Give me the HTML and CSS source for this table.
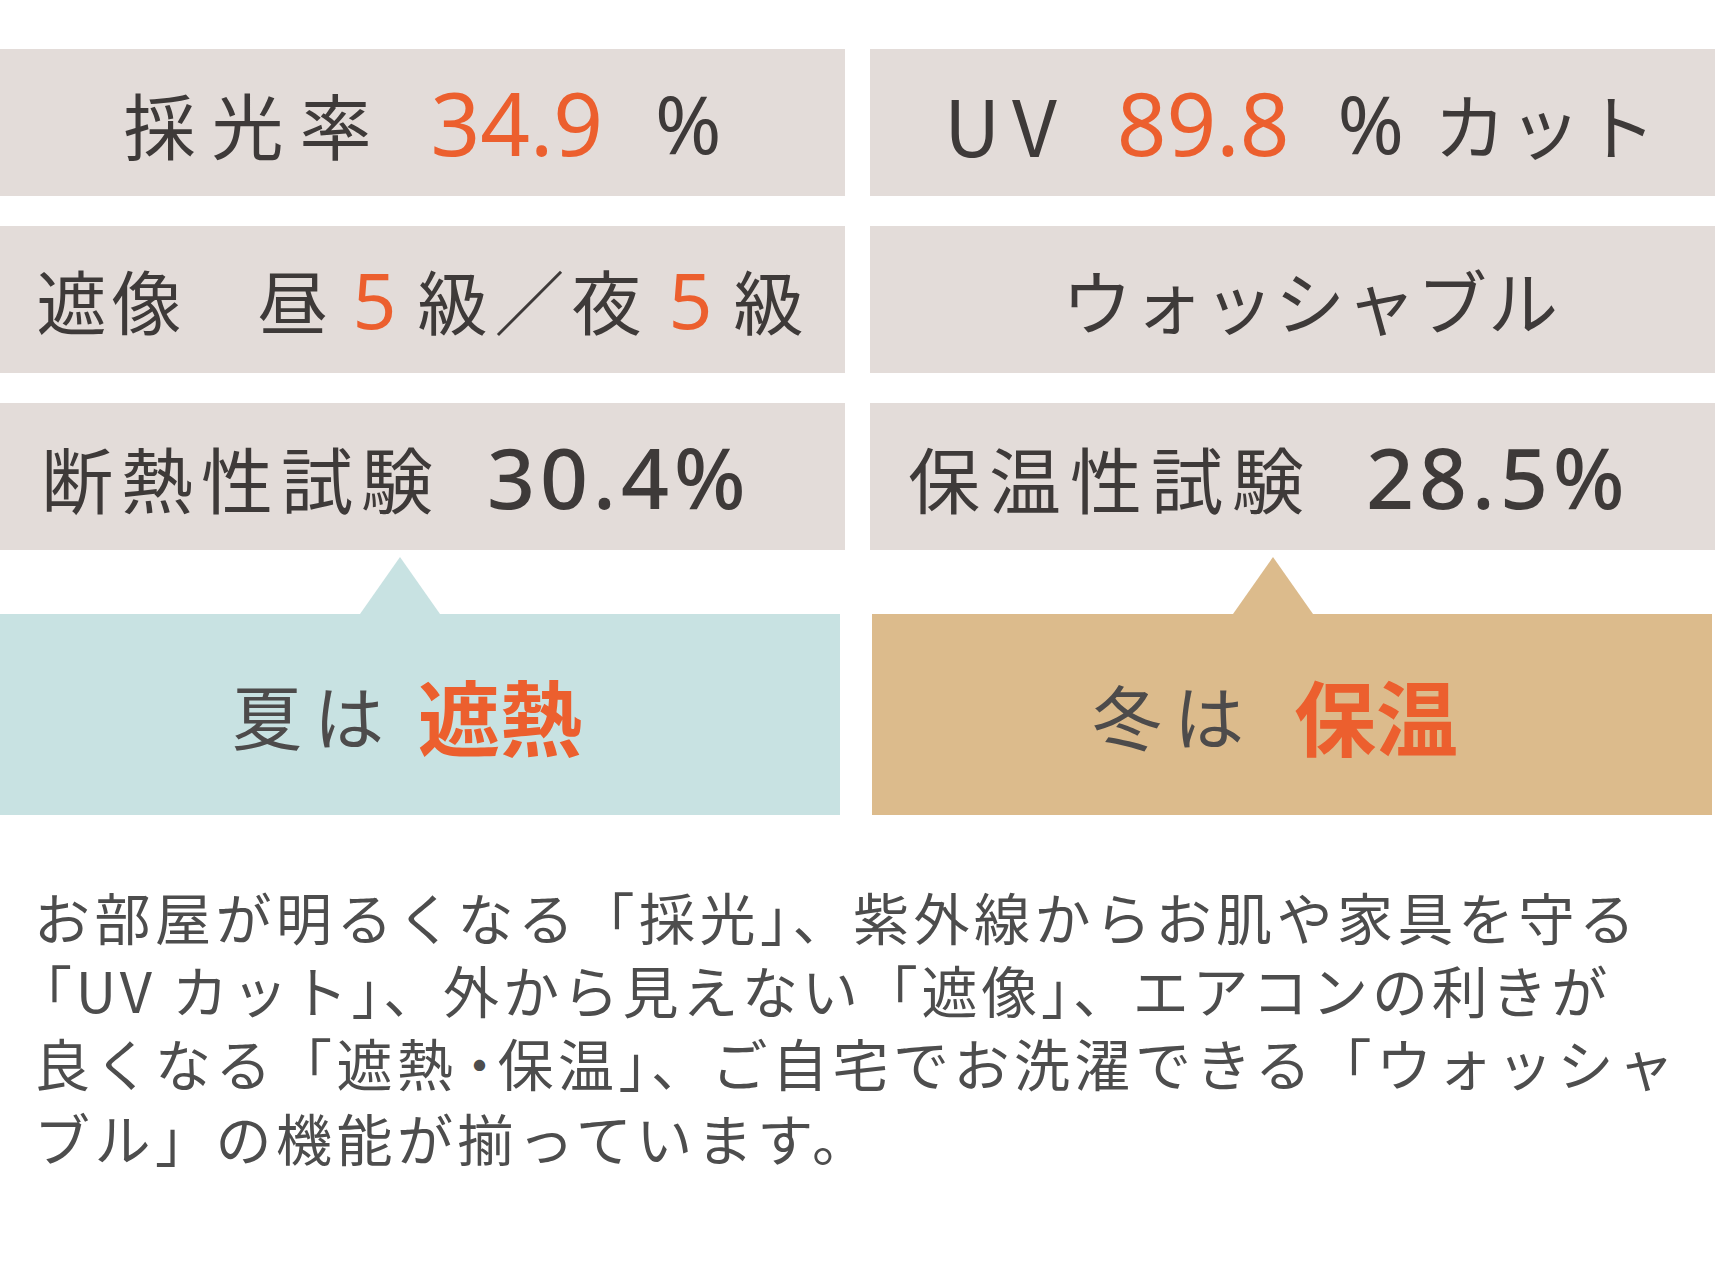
FILE: index.html
```html
<!DOCTYPE html>
<html lang="ja">
<head>
<meta charset="utf-8">
<title>機能</title>
<link rel="stylesheet" href="styles.css">
</head>
<body>
<div class="page">
  <div class="grid">
    <div class="cell c1l">
      <span class="jp t1">採光率</span><span class="num orange n1">34.9</span><span class="num pct p1">%</span>
    </div>
    <div class="cell c1r">
      <span class="jp uv">UV</span><span class="num orange n1r">89.8</span><span class="num pct p1r">%</span><span class="jp kat">カット</span>
    </div>
    <div class="cell c2l">
      <span class="jp t2">遮像</span><span class="jp t2 day">昼</span><span class="num orange n2">5</span><span class="jp t2b">級／夜</span><span class="num orange n2">5</span><span class="jp t2">級</span>
    </div>
    <div class="cell c2r">
      <span class="jp wash">ウォッシャブル</span>
    </div>
    <div class="cell c3l">
      <span class="jp t3">断熱性試験</span><span class="num bold n3">30.4%</span>
    </div>
    <div class="cell c3r">
      <span class="jp t3r">保温性試験</span><span class="num bold n3r">28.5%</span>
    </div>
  </div>

  <div class="callouts">
    <div class="callout summer">
      <div class="pointer"><div class="tri"></div></div>
      <div class="bubble">
        <span class="jp season">夏は</span><span class="jp key">遮熱</span>
      </div>
    </div>
    <div class="callout winter">
      <div class="pointer"><div class="tri"></div></div>
      <div class="bubble">
        <span class="jp season">冬は</span><span class="jp key">保温</span>
      </div>
    </div>
  </div>

  <p class="desc">お部屋が明るくなる「採光」、紫外線からお肌や家具を守る<br><span class="line2"><span class="lead">「</span>UV カット」、外から見えない「遮像」、エアコンの利きが</span><br>良くなる「遮熱<span class="dot">・</span>保温」、ご自宅でお洗濯できる「ウォッシャ<br>ブル」の機能が揃っています。</p>
</div>
</body>
</html>
```

FILE: styles.css
```css
html, body {
  margin: 0;
  padding: 0;
  background: #ffffff;
}

body {
  width: 1715px;
  font-family: "Noto Sans CJK JP", "Noto Sans", sans-serif;
  color: #3e3a39;
}

.page {
  padding-top: 49px;
}

.grid {
  display: grid;
  grid-template-columns: 845px 845px;
  column-gap: 25px;
  row-gap: 30px;
}

.cell {
  height: 147px;
  background: #e3dcd9;
  display: flex;
  align-items: center;
  justify-content: center;
  white-space: nowrap;
  box-sizing: border-box;
}

.jp {
  font-family: "Noto Sans CJK JP", sans-serif;
  font-weight: 400;
  line-height: 1;
  display: inline-block;
}

.num {
  font-family: "Noto Sans", "Open Sans", sans-serif;
  font-weight: 400;
  line-height: 1;
  display: inline-block;
}

.orange {
  color: #ec5f2e;
}

.bold {
  font-weight: 500;
  color: #3e3a39;
}

/* row 1 */
.t1 {
  font-size: 72px;
  letter-spacing: 16px;
}

.n1 {
  font-size: 87px;
  margin-left: 43px;
}

.pct {
  font-size: 80px;
}

.p1 {
  margin-left: 52px;
}

.c1r {
  padding-left: 18px;
}

.uv {
  font-size: 78px;
  letter-spacing: 12px;
}

.n1r {
  font-size: 87px;
  margin-left: 48px;
}

.p1r {
  margin-left: 48px;
}

.kat {
  font-size: 72px;
  letter-spacing: 3px;
  margin-left: 30px;
}

/* row 2 */
.t2 {
  font-size: 70px;
  letter-spacing: 5px;
}

.t2.day {
  margin-left: 71px;
}

.t2b {
  font-size: 70px;
  letter-spacing: 7px;
}

.n2 {
  font-size: 77px;
  margin-left: 20px;
  margin-right: 21px;
}

.c2r {
  padding-left: 36px;
}

.wash {
  font-size: 70px;
  letter-spacing: 1px;
}

/* row 3 */
.c3l,
.c3r {
  justify-content: flex-start;
}

.c3l {
  padding-left: 41px;
}

.c3r {
  padding-left: 38px;
}

.t3 {
  font-size: 72px;
  letter-spacing: 8px;
}

.t3r {
  font-size: 72px;
  letter-spacing: 9px;
}

.n3 {
  font-size: 84px;
  margin-left: 46px;
  letter-spacing: 5px;
}

.n3r {
  font-size: 84px;
  margin-left: 53px;
  letter-spacing: 5px;
}

/* callouts */
.callouts {
  margin-top: 7px;
  display: grid;
  grid-template-columns: 840px 840px;
  column-gap: 32px;
}

.callout {
  display: flex;
  flex-direction: column;
}

.pointer {
  height: 57px;
  display: flex;
  align-items: flex-end;
}

.tri {
  width: 0;
  height: 0;
  margin-left: 360px;
  border-left: 40px solid transparent;
  border-right: 40px solid transparent;
  border-bottom: 57px solid #c8e2e2;
}

.winter .tri {
  margin-left: 361px;
  border-bottom-color: #dcbb8c;
}

.bubble {
  height: 201px;
  display: flex;
  align-items: center;
  justify-content: center;
  white-space: nowrap;
  box-sizing: border-box;
}

.summer .bubble {
  background: #c8e2e2;
  padding-right: 26px;
}

.winter .bubble {
  background: #dcbb8c;
  padding-right: 34px;
}

.season {
  font-size: 70px;
  letter-spacing: 12px;
  color: #4d4b4b;
}

.key {
  font-size: 82px;
  font-weight: 700;
  color: #ec5f2e;
  margin-left: 22px;
}

.winter .key {
  margin-left: 38px;
}

/* description */
.desc {
  margin: 64px 0 0 0;
  padding-left: 34px;
  font-family: "Noto Sans CJK JP", sans-serif;
  font-size: 56px;
  line-height: 73px;
  letter-spacing: 4.5px;
  color: #4d4d4d;
  white-space: nowrap;
}

.desc .line2 {
  letter-spacing: 3.8px;
}

.desc .lead {
  margin-left: -18px;
}

.desc .dot {
  font-size: 44px;
  font-weight: 700;
  letter-spacing: -4px;
  vertical-align: 4px;
}
```
